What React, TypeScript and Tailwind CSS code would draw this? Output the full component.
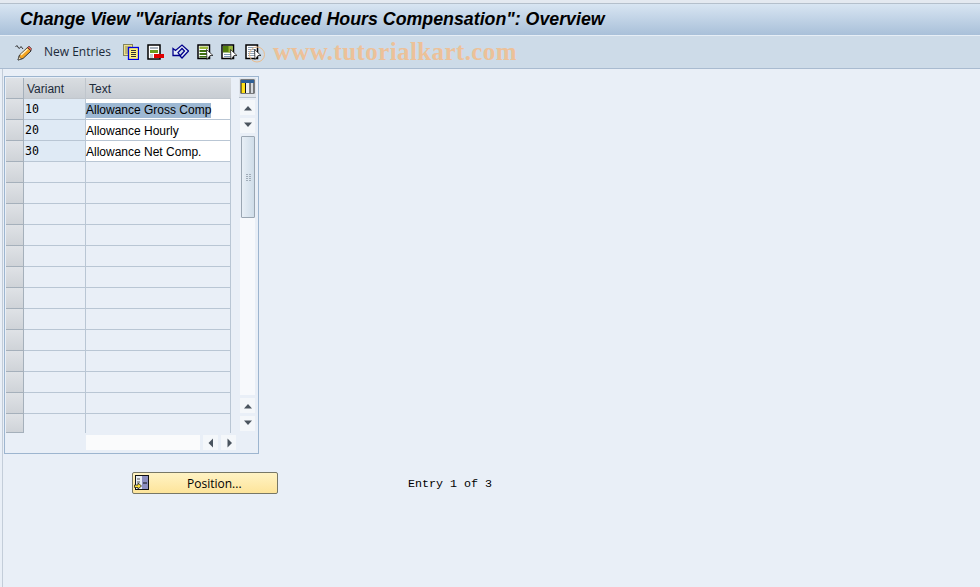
import React from 'react';

const rows = [
  { variant: '10', text: 'Allowance Gross Comp', selected: true },
  { variant: '20', text: 'Allowance Hourly' },
  { variant: '30', text: 'Allowance Net Comp.' },
  ...Array.from({ length: 13 }, () => ({ variant: '', text: '' })),
];

const Pencil = () => (
  <svg width="17" height="17" viewBox="0 0 17 17">
    <path d="M0.5 3 Q2 0 3 3 T6 2.5 L8 5" fill="none" stroke="#333" strokeWidth="1" />
    <path d="M3 16 L4.5 11 L12.5 3.5 L16 7 L8 14.5 Z" fill="#f5a623" stroke="#333" strokeWidth="1" strokeLinejoin="round" />
    <path d="M6 11 L12.5 5" stroke="#fff4d0" strokeWidth="1.5" />
    <path d="M12.5 3.5 L14 2 L16.5 4.5 L16 7 Z" fill="#e0655a" stroke="#333" strokeWidth="0.6" />
    <path d="M3 16 L4 12.5 L6.5 15 Z" fill="#f3e4c5" stroke="#333" strokeWidth="0.6" />
  </svg>
);

const CopyIcon = () => (
  <svg width="16" height="16" viewBox="0 0 16 16">
    <rect x="0.5" y="0.5" width="9" height="11" fill="#eee08c" stroke="#85855c" />
    <path d="M2 3h6M2 5h3M2 7h3M2 9h3" stroke="#8a8a60" strokeWidth="1" />
    <rect x="5.5" y="3.5" width="10" height="12" fill="#fff27a" stroke="#0000e0" strokeWidth="1.3" />
    <path d="M8 6.5h5M8 8.5h5M8 10.5h5M8 12.5h5" stroke="#333" strokeWidth="1" />
  </svg>
);

const SaveVariantIcon = () => (
  <svg width="17" height="16" viewBox="0 0 17 16">
    <rect x="1" y="1" width="12" height="14" fill="#fff" stroke="#000" strokeWidth="1.5" />
    <path d="M3 4h8" stroke="#8c9aa8" strokeWidth="1.5" />
    <rect x="3" y="6" width="8" height="3" fill="#6e9a1e" />
    <rect x="7" y="10" width="10" height="4" fill="#e00000" />
    <path d="M3 11h3M3 13h3" stroke="#8c9aa8" strokeWidth="1" />
  </svg>
);

const UndoIcon = () => (
  <svg width="17" height="16" viewBox="0 0 17 16">
    <path
      d="M1 11.5 V4.5 L3.5 6.5 L10 1 L16.5 7 L10 14 L8 12 L12.5 7 L10 4.5 L6 8.5 L8 11.5 Z"
      fill="#e6edf6"
      stroke="#00008c"
      strokeWidth="1.3"
      strokeLinejoin="miter"
    />
  </svg>
);

const SelectIcon = ({ variant }: { variant: 'all' | 'block' | 'none' }) => (
  <svg width="16" height="16" viewBox="0 0 16 16" className="overflow-visible">
    <rect x="1" y="1" width="11.5" height="13.5" fill="#fff" stroke="#000" strokeWidth="1.5" />
    {variant === 'all' && (
      <>
        <rect x="2.5" y="2.5" width="8.5" height="2.5" fill="#9ab83a" />
        <rect x="2.5" y="6" width="8.5" height="2" fill="#3f6f12" />
        <rect x="2.5" y="9" width="8.5" height="2" fill="#3f6f12" />
        <rect x="2.5" y="12" width="8.5" height="1.5" fill="#3f6f12" />
      </>
    )}
    {variant === 'block' && (
      <>
        <rect x="2" y="2" width="9.5" height="6.5" fill="#527d0c" />
        <rect x="7.5" y="2" width="4" height="6.5" fill="#9ab83a" />
        <path d="M3 10.5h8M3 12.5h8" stroke="#7f9ab5" strokeWidth="1.2" />
      </>
    )}
    {variant === 'none' && <path d="M3 3.5h8M3 5.5h8M3 7.5h8M3 9.5h8M3 11.5h8" stroke="#8ea2b5" strokeWidth="1" />}
    <path d="M9.5 5.5 L16 11.5 L13 11.5 L10 15.5 Z" fill="#fff" stroke="#222" strokeWidth="0.8" />
    {variant === 'none' && <circle cx="12" cy="10.5" r="7.5" fill="none" stroke="#e9bb8c" strokeWidth="1" />}
  </svg>
);

const ColumnsIcon = () => (
  <svg width="15" height="15" viewBox="0 0 15 15">
    <rect x="0.5" y="0.5" width="14" height="14" fill="#111" />
    <rect x="1" y="1" width="13" height="3" fill="#2d5f96" />
    <rect x="1.5" y="4" width="3.5" height="10" fill="#ffe119" />
    <rect x="6" y="4" width="3.5" height="10" fill="#eef0f2" />
    <rect x="10.5" y="4" width="3" height="10" fill="#d5d9dd" />
  </svg>
);

const PositionIcon = () => (
  <svg width="15" height="16" viewBox="0 0 15 16">
    <rect x="1.5" y="0.5" width="13" height="14" fill="#e8edf5" stroke="#111" />
    <rect x="8" y="1" width="6" height="13" fill="#8d8fc0" />
    <path d="M9 8h4" stroke="#111" strokeWidth="1" />
    <path d="M3 4h3M3 7h3" stroke="#555" strokeWidth="1" />
    <path d="M0.5 10 H4 V8 L7.5 11 L4 14 V12.5 H0.5 Z" fill="#ffe23a" stroke="#222" strokeWidth="0.8" />
  </svg>
);

const Arrow = ({ dir }: { dir: 'up' | 'down' | 'left' | 'right' }) => {
  const paths = {
    up: 'M1 6.5 L5 2 L9 6.5 Z',
    down: 'M1 0.5 L9 0.5 L5 5 Z',
    left: 'M6 0.5 L6 9.5 L1.5 5 Z',
    right: 'M2.5 0.5 L2.5 9.5 L7 5 Z',
  };
  const horizontal = dir === 'left' || dir === 'right';
  return (
    <svg width={horizontal ? 8 : 10} height={horizontal ? 10 : 8} viewBox={horizontal ? '0 0 8 10' : '0 0 10 8'}>
      <path d={paths[dir]} fill="#4a545e" />
    </svg>
  );
};

const ScrollButton = ({ dir }: { dir: 'up' | 'down' | 'left' | 'right' }) => (
  <div className="flex h-[15px] w-[15px] shrink-0 items-center justify-center bg-[#f4f7fa]">
    <Arrow dir={dir} />
  </div>
);

const Selector = () => (
  <div className="w-[18px] shrink-0 border-b border-r border-[#a5b0bb] bg-gradient-to-b from-[#dfe2e6] to-[#cfd3d8]" />
);

export default function App() {
  return (
    <div className="flex h-[587px] w-[980px] flex-col overflow-hidden bg-[#e9eff7] font-['Liberation_Sans',sans-serif] text-black">
      <div className="h-[4px] border-b border-[#b4bfcb] bg-[#e4e9f0]" />
      <div className="flex h-[32px] items-center border-b border-[#e6eef6] bg-gradient-to-b from-[#d8e5f2] to-[#a9c0d9] pl-[20px]">
        <h1 className="text-[17.8px] font-bold italic">
          Change View "Variants for Reduced Hours Compensation": Overview
        </h1>
      </div>
      <div className="flex h-[33px] items-center border-b border-[#a9bbd0] bg-[#cddbe8] pl-[15px]">
        <Pencil />
        <span className="ml-[12px] font-['Open_Sans',sans-serif] text-[12px] text-[#1c2a3a]">New Entries</span>
        <div className="ml-[12px] flex items-center gap-[8px]">
          <CopyIcon />
          <SaveVariantIcon />
          <UndoIcon />
          <SelectIcon variant="all" />
          <SelectIcon variant="block" />
          <SelectIcon variant="none" />
        </div>
        <span className="ml-[12px] font-['Liberation_Serif',serif] text-[25px] font-bold tracking-[0.4px] text-[#ecc199]">
          www.tutorialkart.com
        </span>
      </div>

      <div className="ml-[2px] flex flex-1 flex-col border-l border-[#c3cdd9] pl-[1px] pt-[7px]">
        <div className="h-[378px] w-[255px] border border-[#9db5cf] pl-[1px] pt-[1px]">
          <div className="flex">
            <div className="w-[225px] shrink-0">
              <div className="flex h-[21px] text-[12px] text-[#1c2a3a]">
                <Selector />
                <div className="flex w-[62px] items-center border-r border-b border-[#c0c6cd] bg-gradient-to-b from-[#d9dde1] to-[#c8cdd3] pl-[3px] pt-[1px]">
                  Variant
                </div>
                <div className="flex flex-1 items-center border-b border-[#c0c6cd] bg-gradient-to-b from-[#d9dde1] to-[#c8cdd3] pl-[3px] pt-[1px]">
                  Text
                </div>
              </div>
              {rows.map((row, i) => (
                <div key={i} className={`flex ${i === 15 ? 'h-[19px]' : 'h-[21px]'}`}>
                  <Selector />
                  <div
                    className={`flex w-[62px] items-center border-r border-[#b9c6d4] pl-[1px] pt-[2px] font-['DejaVu_Sans_Mono',monospace] text-[11.6px] ${
                      i === 15 ? '' : 'border-b'
                    } ${row.text ? 'bg-[#dfeaf5]' : ''}`}
                  >
                    {row.variant}
                  </div>
                  <div
                    className={`flex flex-1 items-center border-r border-[#b9c6d4] pt-[2px] text-[12px] leading-[15px] ${
                      i === 15 ? '' : 'border-b'
                    } ${row.text ? 'bg-white' : ''}`}
                  >
                    <span className={row.selected ? 'bg-[#9db8d3]' : ''}>{row.text}</span>
                  </div>
                </div>
              ))}
              <div className="ml-[80px] mt-[2px] flex w-[150px] items-center gap-[3px]">
                <div className="h-[15px] w-[114px] shrink-0 bg-[#fafbfc]" />
                <ScrollButton dir="left" />
                <ScrollButton dir="right" />
              </div>
            </div>

            <div className="ml-[9px] flex w-[15px] flex-col items-center">
              <div className="flex h-[20px] w-[17px] items-start justify-center border-b border-[#b6c0cb] bg-[#dfe4ea] pt-[1px]">
                <ColumnsIcon />
              </div>
              <div className="mt-[2px]">
                <ScrollButton dir="up" />
              </div>
              <div className="mt-[3px]">
                <ScrollButton dir="down" />
              </div>
              <div className="ml-[1px] mt-[3px] flex h-[82px] w-[14px] items-center justify-center rounded-[1px] border border-[#9aa6b2] bg-gradient-to-r from-[#e8eff6] to-[#cfdde9]">
                <div className="grid grid-cols-2 gap-[1px]">
                  {Array.from({ length: 8 }, (_, i) => (
                    <div key={i} className="h-[1px] w-[2px] bg-[#a0acb8]" />
                  ))}
                </div>
              </div>
              <div className="h-[177px] w-[15px] bg-[#f7f9fc]" />
              <div className="mt-[3px]">
                <ScrollButton dir="up" />
              </div>
              <div className="mt-[3px]">
                <ScrollButton dir="down" />
              </div>
            </div>
          </div>
        </div>

        <div className="mt-[18px] flex items-center">
          <button className="ml-[128px] flex h-[22px] w-[146px] items-center rounded-[2px] border border-[#777766] bg-gradient-to-b from-[#fff3c4] to-[#fde49a] pl-[1px]">
            <PositionIcon />
            <span className="ml-[38px] pt-[1px] font-['Open_Sans',sans-serif] text-[12px]">Position...</span>
          </button>
          <span className="ml-[130px] mt-[3px] font-['Liberation_Mono',monospace] text-[11.67px]">Entry 1 of 3</span>
        </div>
      </div>
    </div>
  );
}
